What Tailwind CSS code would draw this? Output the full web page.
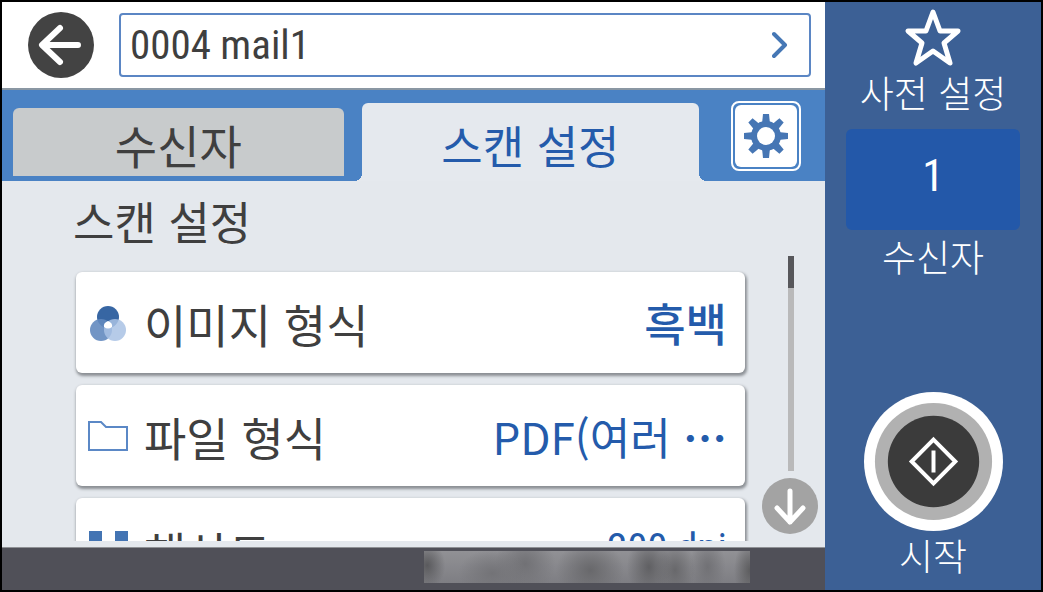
<!DOCTYPE html>
<html lang="ko">
<head>
  <meta charset="UTF-8">
  <meta name="viewport" content="width=device-width, initial-scale=1.0">
  <title>스캔 설정</title>
  <script src="https://cdn.jsdelivr.net/npm/@tailwindcss/browser@4"></script>
</head>
<body class="h-screen flex overflow-hidden border-2 border-black bg-[#e4e8ed] font-['Noto_Sans_CJK_KR',sans-serif] text-[#3f3f3f]">
  <main class="flex-1 min-w-0 flex flex-col">
    <header class="shrink-0 h-[88px] flex items-center pl-[26px] pr-[14px] gap-[25px] bg-white border-b-2 border-[#8a97a3]">
      <button aria-label="뒤로" class="shrink-0">
        <svg class="size-[66px]" viewBox="0 0 66 66" fill="none">
          <circle cx="33" cy="33" r="33" fill="#434343"/>
          <path d="M50 33H15M32 16L14 33l18 17" stroke="#fff" stroke-width="6" stroke-linecap="round" stroke-linejoin="round"/>
        </svg>
      </button>
      <button class="flex-1 h-16 flex items-center justify-between pl-[9px] pr-[21px] border-2 border-[#5b86c4] rounded-sm font-['Roboto_Condensed','Liberation_Sans',sans-serif] text-[41px] leading-none">
        <span>0004 mail1</span>
        <svg class="w-4 h-7" viewBox="0 0 16 28" fill="none" stroke="#4577b5" stroke-width="4" stroke-linecap="round" stroke-linejoin="round">
          <path d="M2 3l11 11L2 25"/>
        </svg>
      </button>
    </header>

    <nav class="shrink-0 h-[91px] flex items-start pl-[11px] pr-6 bg-[#4a82c4]">
      <button class="flex-[50] mt-[18px] pt-1 h-[68px] rounded-t-md bg-[#c8cbcc] text-[46px] leading-none">수신자</button>
      <button class="relative flex-[51] ml-[18px] mr-8 mt-[13px] pt-1 h-[78px] rounded-t-md bg-[#e5e9ee] text-[45px] leading-none text-[#245bab] before:absolute before:bottom-0 before:-left-2 before:size-2 before:bg-[radial-gradient(circle_at_top_left,#4a82c4_8px,#e5e9ee_8px)] after:absolute after:bottom-0 after:-right-2 after:size-2 after:bg-[radial-gradient(circle_at_top_right,#4a82c4_8px,#e5e9ee_8px)]">스캔 설정</button>
      <button aria-label="설정" class="shrink-0 mt-[11px] size-[70px] p-[2px] border-2 border-white rounded-lg">
        <span class="flex size-full items-center justify-center rounded-md bg-white">
          <svg class="size-11" viewBox="-22 -22 44 44" fill="#4676b4">
            <path id="tooth" d="M-4-12L-3-22H3L4-12V12L3 22H-3L-4 12z"/>
            <use href="#tooth" transform="rotate(45)"/>
            <use href="#tooth" transform="rotate(90)"/>
            <use href="#tooth" transform="rotate(135)"/>
            <circle r="15"/>
            <circle r="9" fill="#fff"/>
          </svg>
        </span>
      </button>
    </nav>

    <div class="flex-1 min-h-0 flex pl-[74px] pr-[6px]">
      <section class="flex-1 min-w-0 flex flex-col pb-[6px]">
        <h1 class="shrink-0 h-[85px] -ml-[3px] pt-[17px] text-[45px] leading-[46px]">스캔 설정</h1>
        <ul class="flex-1 min-h-0 -mx-1 px-1 pt-[6px] overflow-hidden flex flex-col gap-3">
          <li class="shrink-0">
            <button class="w-full h-[101px] flex items-center gap-4 px-3 rounded-md bg-white shadow-[1px_2px_3px_1px_#8b8f94] text-[46px] leading-none">
              <svg class="shrink-0 size-10" viewBox="0 0 40 40">
                <circle cx="20" cy="14" r="11" fill="#3766a3"/>
                <circle cx="13" cy="27" r="11" fill="#6389bf" fill-opacity=".9"/>
                <circle cx="27" cy="27" r="11" fill="#a9c2e4" fill-opacity=".85"/>
                <path d="M20 18q5 2 4 6-4 3-8 0-1-4 4-6z" fill="#fff"/>
              </svg>
              <span>이미지 형식</span>
              <span class="ml-auto pr-[6px] text-[45px] font-medium text-[#245bab]">흑백</span>
            </button>
          </li>
          <li class="shrink-0">
            <button class="w-full h-[101px] flex items-center gap-4 px-3 rounded-md bg-white shadow-[1px_2px_3px_1px_#8b8f94] text-[46px] leading-none">
              <svg class="shrink-0 size-10" viewBox="0 0 40 40" fill="none" stroke="#5b88c6" stroke-width="2">
                <path d="M1 6h12l5 5h21v23H1z"/>
              </svg>
              <span>파일 형식</span>
              <span class="ml-auto pr-[6px] text-[44px] text-[#245bab]">PDF(여러 <span class="font-bold">⋯</span></span>
            </button>
          </li>
          <li class="shrink-0">
            <button class="w-full h-[101px] flex items-center gap-4 px-3 rounded-md bg-white shadow-[1px_2px_3px_1px_#8b8f94] text-[46px] leading-none">
              <svg class="shrink-0 size-10" viewBox="0 0 40 40" fill="#4374b3">
                <path d="M1 2h13v13H1zM27 2h13v13H27zM14 15h13v13H14zM1 28h13v12H1zM27 28h13v12H27z"/>
              </svg>
              <span class="pt-1">해상도</span>
              <span class="ml-auto pr-[6px] font-['Roboto_Condensed','Liberation_Sans',sans-serif] text-[41px] text-[#245bab]">200 dpi</span>
            </button>
          </li>
        </ul>
      </section>

      <div class="shrink-0 w-[57px] ml-[17px] pt-[75px] pb-3 flex flex-col items-center gap-[7px]">
        <div class="flex-1 w-[6px] bg-[#b9b9ba]">
          <div class="h-8 bg-[#57575b]"></div>
        </div>
        <button aria-label="아래로">
          <svg class="size-[57px]" viewBox="0 0 57 57" fill="none">
            <circle cx="28" cy="28" r="28" fill="#a3a3a3"/>
            <path d="M28 13v31M15 30l13 14 13-14" stroke="#fff" stroke-width="5" stroke-linecap="round" stroke-linejoin="round"/>
          </svg>
        </button>
      </div>
    </div>

    <footer class="shrink-0 h-[43px] flex items-start justify-end pr-[75px] pt-[3px] bg-[#505058] border-t border-[#8f9195]">
      <div class="w-[326px] h-8 bg-[radial-gradient(18px_24px_at_1%_45%,#5a5a5d,transparent),radial-gradient(34px_24px_at_21%_70%,#737377,transparent),radial-gradient(30px_32px_at_31%_40%,#717175,transparent),radial-gradient(34px_30px_at_51%_60%,#68686b,transparent),radial-gradient(22px_32px_at_69%_50%,#606063,transparent),radial-gradient(20px_30px_at_77%_60%,#68686b,transparent),radial-gradient(18px_30px_at_87%_50%,#717175,transparent),radial-gradient(16px_30px_at_100%_60%,#5c5c5e,transparent),linear-gradient(#919195,#7e7e83)]"></div>
    </footer>
  </main>

  <aside class="shrink-0 w-[216px] flex flex-col items-center pt-1 bg-[#3c6095] text-white text-[37px] leading-none font-light">
    <button class="flex flex-col items-center">
      <svg class="size-[62px]" viewBox="0 0 62 62" fill="none" stroke="#fff" stroke-width="5" stroke-linejoin="round">
        <path d="M31 6l7 19h18L42 37l6 20-17-12-17 12 6-20L6 25h18z"/>
      </svg>
      <span class="mt-[6px]">사전 설정</span>
    </button>
    <button class="mt-[18px] w-[174px] h-[101px] flex items-center justify-center rounded-md bg-[#2358a9] font-['Roboto_Condensed','Liberation_Sans',sans-serif] text-[44px] font-normal pb-2">1</button>
    <span class="mt-2">수신자</span>
    <button class="mt-auto flex flex-col items-center pb-4">
      <svg class="size-[139px]" viewBox="0 0 140 140" fill="none">
        <circle cx="70" cy="70" r="70" fill="#fff"/>
        <circle cx="70" cy="70" r="59" fill="#b1b1b1"/>
        <circle cx="70" cy="70" r="46" fill="#3b3b3b"/>
        <path d="M70 48l22 22-22 22-22-22zM70 59v22" stroke="#fff" stroke-width="4"/>
      </svg>
      <span class="mt-[6px]">시작</span>
    </button>
  </aside>
</body>
</html>
